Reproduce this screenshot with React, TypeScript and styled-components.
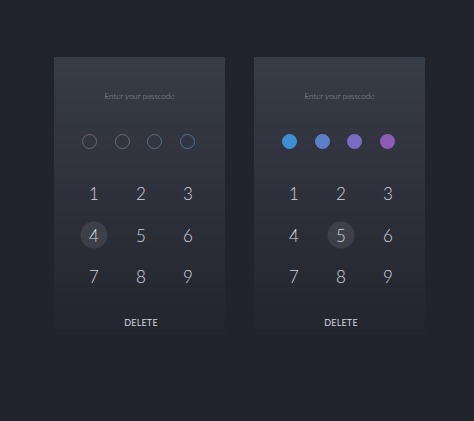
import React from "react";
import styled, { createGlobalStyle } from "styled-components";

const Global = createGlobalStyle`
  html, body { margin: 0; padding: 0; background: #21242c; }
  body { font-family: Lato, "Open Sans", "Liberation Sans", sans-serif; }
`;

const Page = styled.div`
  width: 474px;
  height: 421px;
  background: #21242c;
  display: flex;
  gap: 29px;
  padding: 57px 0 0 54px;
  box-sizing: border-box;
`;

const Card = styled.div`
  width: 171px;
  height: 278px;
  background: linear-gradient(180deg, #383c47 0%, #2f323c 45%, #22252d 100%);
  display: flex;
  flex-direction: column;
  align-items: center;
  padding-top: 34px;
  box-sizing: border-box;
`;

const Title = styled.div`
  font-size: 8px;
  line-height: 10px;
  font-weight: 300;
  color: #959aa4;
`;

const Dots = styled.div`
  display: flex;
  gap: 17.5px;
  margin-top: 32.5px;
  margin-left: -2px;
`;

const Dot = styled.div<{ $color: string; $filled: boolean }>`
  width: 15px;
  height: 15px;
  border-radius: 50%;
  box-sizing: border-box;
  border: ${(p) => (p.$filled ? "none" : `1.2px solid ${p.$color}`)};
  background: ${(p) => (p.$filled ? p.$color : "transparent")};
`;

const Keypad = styled.div`
  display: grid;
  grid-template-columns: repeat(3, 47px);
  grid-auto-rows: 41.5px;
  margin-top: 24.5px;
  padding-left: 3px;
`;

const Key = styled.div<{ $active: boolean }>`
  display: flex;
  align-items: center;
  justify-content: center;
  position: relative;
  font-size: 17px;
  font-weight: 300;
  color: #d3d6dd;
  &::before {
    content: "";
    position: absolute;
    width: 27px;
    height: 27px;
    border-radius: 50%;
    left: 50%;
    top: 50%;
    transform: translate(-50%, -50%);
    background: ${(p) => (p.$active ? "rgba(255,255,255,0.09)" : "transparent")};
  }
  span { position: relative; }
`;

const Delete = styled.div`
  margin-top: 19px;
  font-size: 9px;
  line-height: 12px;
  font-weight: 400;
  letter-spacing: 0.2px;
  color: #d4d7df;
  padding-left: 3px;
`;

const outlineColors = ["#6a6579", "#646a7c", "#5d6b82", "#4d6f96"];
const fillColors = ["#3e8fd1", "#5c80c8", "#7a6cc0", "#8e5cb6"];

function Pad({ filled, active }: { filled: boolean; active: number }) {
  const colors = filled ? fillColors : outlineColors;
  return (
    <Card>
      <Title>Enter your passcode</Title>
      <Dots>
        {colors.map((c, i) => (
          <Dot key={i} $color={c} $filled={filled} />
        ))}
      </Dots>
      <Keypad>
        {[1, 2, 3, 4, 5, 6, 7, 8, 9].map((n) => (
          <Key key={n} $active={n === active}>
            <span>{n}</span>
          </Key>
        ))}
      </Keypad>
      <Delete>DELETE</Delete>
    </Card>
  );
}

export default function App() {
  return (
    <>
      <Global />
      <Page>
        <Pad filled={false} active={4} />
        <Pad filled={true} active={5} />
      </Page>
    </>
  );
}
